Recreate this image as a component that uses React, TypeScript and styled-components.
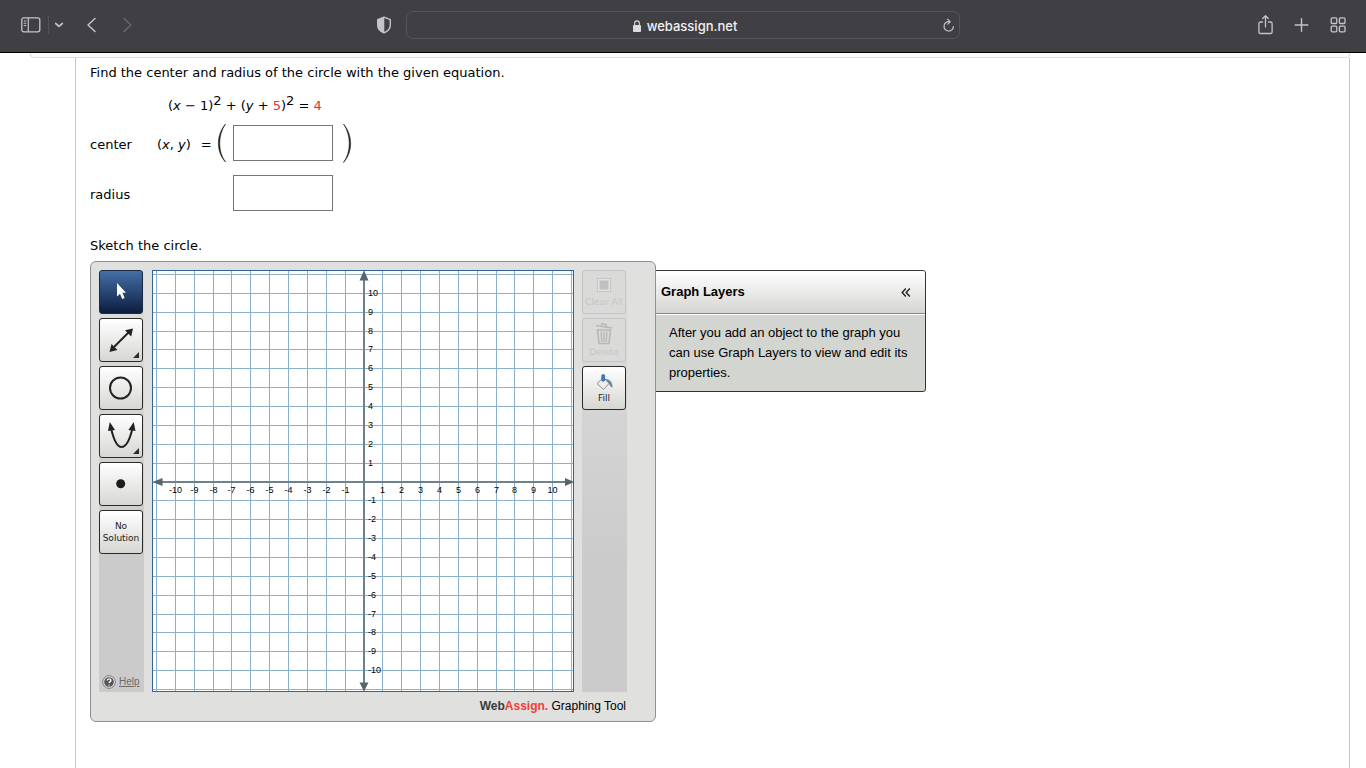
import React from "react";
import styled, { createGlobalStyle, css } from "styled-components";

const GlobalStyle = createGlobalStyle`
  *, *::before, *::after { box-sizing: border-box; }
  html, body, #root { min-height: 100%; }
  html { height: 100%; }
  body, #root { height: 100%; }
  body {
    margin: 0;
    background: #fff;
    color: #000;
    font-family: "DejaVu Sans", Verdana, sans-serif;
    font-size: 13px;
    line-height: 16px;
  }
  button { font: inherit; color: inherit; margin: 0; padding: 0; }
`;

const Page = styled.div`
  min-height: 100%;
  display: flex;
  flex-direction: column;
`;

/* ---------- browser toolbar ---------- */

const BrowserBar = styled.header`
  display: grid;
  grid-template-columns: 1fr 41% 1fr;
  align-items: center;
  height: 53px;
  padding-bottom: 2px;
  background: #403f43;
  border-bottom: 1px solid #000;
  color: #c6c4c9;
`;

const BarGroup = styled.div<{ $end?: boolean }>`
  display: flex;
  align-items: center;
  justify-content: ${(p) => (p.$end ? "flex-end" : "flex-start")};
  gap: ${(p) => (p.$end ? "16px" : "0")};
  padding: ${(p) => (p.$end ? "0 18px 0 0" : "0 11px 0 21px")};
`;

const BarButton = styled.button<{ $dim?: boolean; $push?: boolean }>`
  display: flex;
  align-items: center;
  justify-content: center;
  height: 24px;
  border: 0;
  background: none;
  color: ${(p) => (p.$dim ? "#69686c" : "#c6c4c9")};
  margin-left: ${(p) => (p.$push ? "auto" : "0")};
`;

const BarDivider = styled.span`
  width: 1px;
  height: 18px;
  margin: 0 5px 0 7px;
  background: #545357;
`;

const NavButtons = styled.div`
  display: flex;
  gap: 16px;
  margin-left: 16px;
`;

const AddressBar = styled.div`
  display: grid;
  grid-template-columns: 24px 1fr 20px;
  align-items: center;
  height: 28px;
  margin: 0 3px;
  border: 1px solid #55545a;
  border-radius: 7px;
`;

const Address = styled.div`
  grid-column: 2;
  display: flex;
  align-items: center;
  justify-content: center;
  gap: 6px;
  padding-top: 2px;
  color: #f2f1f3;
  font-family: Inter, sans-serif;
  font-size: 13px;
  font-weight: 500;
`;

/* ---------- question ---------- */

const PreviousSection = styled.div`
  height: 5px;
  flex: none;
  margin: 0 16px 0 30px;
  background: #fbfbfb;
  border: 1px solid #ddd;
  border-top: 0;
  border-radius: 0 0 4px 4px;
`;

const Question = styled.main`
  flex: 1;
  margin: 0 16px 0 75px;
  padding: 7px 14px 46px;
  border: solid #c8c8c8;
  border-width: 0 1px;
`;

const Prompt = styled.p`
  margin: 0;
`;

const Equation = styled.div`
  margin: 17px 0 11px 78px;

  sup {
    font-size: 13px;
    line-height: 0;
    vertical-align: 5px;
  }
`;

const Given = styled.span`
  color: #e5302c;
`;

const AnswerRow = styled.div`
  display: grid;
  grid-template-columns: 67px 60px 16px 100px auto;
  grid-template-rows: 36px;
  justify-content: start;
  align-items: center;
  margin-bottom: 14px;
`;

const AnswerLabel = styled.label`
  padding-top: 3px;
`;

const Tuple = styled.span`
  display: flex;
  gap: 10px;
  padding-top: 3px;
`;

const AnswerInput = styled.input`
  grid-column: 4;
  width: 100%;
  height: 36px;
  padding: 4px 8px;
  border: 1px solid #767676;
  border-radius: 0;
  background: #fff;
  font: inherit;
`;

const Paren = styled.svg<{ $right?: boolean }>`
  display: block;
  margin-left: ${(p) => (p.$right ? "10px" : "0")};
`;

const SketchPrompt = styled(Prompt)`
  margin: 27px 0 7px;
`;

/* ---------- graphing tool ---------- */

const Workspace = styled.div`
  display: flex;
  align-items: flex-start;
`;

const GraphTool = styled.section`
  position: relative;
  z-index: 1;
  flex: none;
  padding: 8px 28px 7px 8px;
  background: #e0e0de;
  border: 1px solid #909090;
  border-radius: 6px;
`;

const ToolBody = styled.div`
  display: flex;
  gap: 8px;
`;

const ToolColumn = styled.div`
  display: flex;
  flex-direction: column;
  gap: 4px;
  width: 45px;
  padding-right: 1px;
  background: linear-gradient(#dddddd, #cbcbcb 70%);
`;

const ToolButton = styled.button<{ $active?: boolean }>`
  display: flex;
  flex-direction: column;
  align-items: center;
  justify-content: center;
  height: 44px;
  border: 1px solid #2a2a2a;
  border-radius: 3px;
  background: linear-gradient(#ffffff, #d6d6d3);
  color: #222;
  font-size: 9px;
  line-height: 12px;

  ${(p) =>
    p.$active &&
    css`
      border-color: #1c2a44;
      background: linear-gradient(#456fa8, #0b1e3f);
      color: #fff;
    `}

  &:disabled {
    border-color: #c4c4c4;
    background: #dadad9;
    color: #c6c6c6;
  }
`;

const HelpLink = styled.a`
  display: flex;
  align-items: center;
  gap: 3px;
  margin: auto 0 2px 3px;
  color: #6b6b6b;
  font-family: "Liberation Sans", Arial, sans-serif;
  font-size: 10px;
`;

const ToolFooter = styled.div`
  margin-top: 6px;
  padding-right: 1px;
  text-align: right;
  font-family: "Liberation Sans", Arial, sans-serif;
  font-size: 12px;

  strong { color: #3a3a3a; }
  em { color: #ef3e3a; font-style: normal; }
`;

const Layers = styled.aside`
  width: 271px;
  margin: 9px 0 0 -1px;
  overflow: hidden;
  background: #d3d5d0;
  border: 1px solid #333;
  border-radius: 0 3px 3px 0;
  font-family: "Liberation Sans", Arial, sans-serif;
`;

const LayersHeader = styled.div`
  display: flex;
  align-items: center;
  justify-content: space-between;
  height: 43px;
  padding: 0 14px 0 5px;
  background: linear-gradient(#ffffff, #d5d5d2);
  border-bottom: 1px solid #868686;
`;

const LayersTitle = styled.h2`
  margin: 0;
  font-size: 13px;
  line-height: 20px;
`;

const CollapseButton = styled.button`
  display: flex;
  border: 0;
  background: none;
`;

const LayersText = styled.p`
  margin: 0;
  padding: 8px 13px;
  border-top: 1px solid #fff;
  line-height: 20px;
`;

/* ---------- graph ---------- */

const SIZE = 422;
const CENTER = 212;
const UNIT = 18.86;
const GridText = styled.text`
  font-family: "Liberation Sans", Arial, sans-serif;
  font-size: 9px;
  fill: #000;
`;

const lines = Array.from({ length: 23 }, (_, i) => i - 11);
const labels = lines.filter((n) => n !== 0 && Math.abs(n) < 11);

function Graph() {
  const at = (n: number) => Math.round(CENTER + n * UNIT - 0.5) + 0.5;
  return (
    <svg width={SIZE} height={SIZE} role="img" aria-label="Coordinate grid">
      <rect width={SIZE} height={SIZE} fill="#fff" />
      {lines.map((n) => (
        <g key={n} stroke="#8cb0c9">
          <line x1={at(n)} x2={at(n)} y1="0" y2={SIZE} />
          <line y1={at(n)} y2={at(n)} x1="0" x2={SIZE} />
        </g>
      ))}
      <rect x="0.5" y="0.5" width={SIZE - 1} height={SIZE - 1} fill="none" stroke="#35638f" />
      <g stroke="#6b8391" strokeWidth="2">
        <line x1={CENTER} x2={CENTER} y1="4" y2={SIZE - 4} />
        <line y1={CENTER} y2={CENTER} x1="4" x2={SIZE - 4} />
      </g>
      <g fill="#56646c">
        <path d="M212 0.5 L216.5 10.5 H207.5 Z" />
        <path d="M212 421.5 L216.5 412.5 H207.5 Z" />
        <path d="M0.5 212 L10.5 208 V216 Z" />
        <path d="M422 212 L413 208 V216 Z" />
      </g>
      {labels.map((n) => (
        <GridText key={`x${n}`} x={at(n)} y="223" textAnchor="middle">
          {n}
        </GridText>
      ))}
      {labels.map((n) => (
        <GridText key={`y${n}`} x="216" y={at(-n) + 2.5}>
          {n}
        </GridText>
      ))}
    </svg>
  );
}

/* ---------- icons ---------- */

const Corner = () => <path d="M39 33 V39 H33 Z" fill="#2a2a2a" />;

const ToolIcon = ({ children }: { children: React.ReactNode }) => (
  <svg width="42" height="42" viewBox="0 0 42 42" aria-hidden="true">
    {children}
  </svg>
);

const SidebarIcon = () => (
  <svg width="20" height="16" viewBox="0 0 20 16" fill="none" stroke="currentColor" aria-hidden="true">
    <rect x="0.8" y="0.8" width="18" height="14" rx="2" strokeWidth="1.3" />
    <path d="M7.3 1V15" strokeWidth="1.2" />
    <path d="M2.8 4H5.3M2.8 6.3H5.3M2.8 8.6H5.3" />
  </svg>
);

export default function App() {
  return (
    <Page>
      <GlobalStyle />
      <BrowserBar>
        <BarGroup>
          <BarButton aria-label="Show sidebar">
            <SidebarIcon />
          </BarButton>
          <BarDivider />
          <BarButton aria-label="Tab groups">
            <svg width="10" height="6" viewBox="0 0 10 6" fill="none" stroke="currentColor" strokeWidth="1.7" strokeLinecap="round" strokeLinejoin="round">
              <path d="M1.7 1.5L5 4.3L8.3 1.5" />
            </svg>
          </BarButton>
          <NavButtons>
            <BarButton aria-label="Back">
              <svg width="20" height="16" viewBox="0 0 20 16" fill="none" stroke="currentColor" strokeWidth="1.5" strokeLinecap="round" strokeLinejoin="round">
                <path d="M15 1.5L8 8L15 14.5" />
              </svg>
            </BarButton>
            <BarButton aria-label="Forward" $dim>
              <svg width="20" height="16" viewBox="0 0 20 16" fill="none" stroke="currentColor" strokeWidth="1.4" strokeLinecap="round" strokeLinejoin="round">
                <path d="M8 1.5L15 8L8 14.5" />
              </svg>
            </BarButton>
          </NavButtons>
          <BarButton aria-label="Privacy report" $push>
            <svg width="16" height="18" viewBox="0 0 16 18">
              <path d="M8 1.2L14.3 3.6V9.2C14.3 12.8 11.8 15.2 8 16.8C4.2 15.2 1.7 12.8 1.7 9.2V3.6Z" fill="none" stroke="currentColor" strokeWidth="1.4" strokeLinejoin="round" />
              <path d="M8.3 1.2V16.8C4.2 15.2 1.7 12.8 1.7 9.2V3.6Z" fill="currentColor" />
            </svg>
          </BarButton>
        </BarGroup>
        <AddressBar>
          <Address>
            <svg width="8" height="12" viewBox="0 0 8 12" aria-hidden="true">
              <rect x="0" y="5" width="8" height="7" rx="1" fill="#dcdbde" />
              <path d="M1.7 5.5V3.2A2.3 2.3 0 0 1 6.3 3.2V5.5" fill="none" stroke="#dcdbde" strokeWidth="1.1" />
            </svg>
            <span>webassign.net</span>
          </Address>
          <BarButton aria-label="Reload">
            <svg width="14" height="15" viewBox="0 0 14 15" fill="none" stroke="currentColor" strokeWidth="1.2" strokeLinecap="round" strokeLinejoin="round">
              <path d="M7.5 3.7A4.7 4.7 0 1 0 11.4 8.5" />
              <path d="M5.6 1.2L8.2 3.8L5.8 6.2" />
            </svg>
          </BarButton>
        </AddressBar>
        <BarGroup $end>
          <BarButton aria-label="Share">
            <svg width="20" height="22" viewBox="0 0 20 22" fill="none" stroke="currentColor" strokeWidth="1.3" strokeLinecap="round" strokeLinejoin="round">
              <path d="M6.5 8H4.5A1.6 1.6 0 0 0 2.9 9.6V17.9A1.6 1.6 0 0 0 4.5 19.5H14.5A1.6 1.6 0 0 0 16.1 17.9V9.6A1.6 1.6 0 0 0 14.5 8H12.5" />
              <path d="M9.5 13V2M6.7 4.5L9.5 1.7L12.3 4.5" />
            </svg>
          </BarButton>
          <BarButton aria-label="New tab">
            <svg width="20" height="16" viewBox="0 0 20 16" fill="none" stroke="currentColor" strokeWidth="1.4" strokeLinecap="round">
              <path d="M3.2 8H15.8M9.5 1.7V14.3" />
            </svg>
          </BarButton>
          <BarButton aria-label="Tab overview">
            <svg width="20" height="16" viewBox="0 0 20 16" fill="none" stroke="currentColor" strokeWidth="1.3">
              <rect x="3.2" y="0.9" width="5.6" height="5.6" rx="1" />
              <rect x="11.4" y="0.9" width="5.6" height="5.6" rx="1" />
              <rect x="3.2" y="9.2" width="5.6" height="5.6" rx="1" />
              <rect x="11.4" y="9.2" width="5.6" height="5.6" rx="1" />
            </svg>
          </BarButton>
        </BarGroup>
      </BrowserBar>

      <PreviousSection />
      <Question>
        <Prompt>Find the center and radius of the circle with the given equation.</Prompt>
        <Equation>
          (<i>x</i> − 1)<sup>2</sup> + (<i>y</i> + <Given>5</Given>)<sup>2</sup> = <Given>4</Given>
        </Equation>
        <AnswerRow>
          <AnswerLabel htmlFor="center">center</AnswerLabel>
          <Tuple>
            <span>(<i>x</i>, <i>y</i>)</span>
            <span>=</span>
          </Tuple>
          <Paren width="9" height="40" viewBox="0 0 9 40" aria-hidden="true">
            <path d="M8.5 1C-1 12 -1 29 8.5 39C0.8 29 0.8 12 8.5 1Z" fill="#222" stroke="#222" strokeWidth="0.6" />
          </Paren>
          <AnswerInput id="center" type="text" />
          <Paren $right width="9" height="40" viewBox="0 0 9 40" aria-hidden="true">
            <path d="M0.5 1C10 12 10 29 0.5 39.5C8.2 29 8.2 12 0.5 1Z" fill="#222" stroke="#222" strokeWidth="0.6" />
          </Paren>
        </AnswerRow>
        <AnswerRow>
          <AnswerLabel htmlFor="radius">radius</AnswerLabel>
          <AnswerInput id="radius" type="text" />
        </AnswerRow>
        <SketchPrompt>Sketch the circle.</SketchPrompt>

        <Workspace>
          <GraphTool aria-label="Graphing Tool">
            <ToolBody>
              <ToolColumn>
                <ToolButton $active aria-label="Select" aria-pressed="true">
                  <ToolIcon>
                    <path d="M17 12L17 25.5L20 22.7L22.2 28L24.7 26.9L22.4 21.8H26Z" fill="#fff" />
                  </ToolIcon>
                </ToolButton>
                <ToolButton aria-label="Line">
                  <ToolIcon>
                    <path d="M14 28L29 13" stroke="#222" strokeWidth="2" />
                    <path d="M33 9.5L31.2 17.5L25 11.3ZM9.5 33L17.5 31L11.5 25Z" fill="#222" />
                    <Corner />
                  </ToolIcon>
                </ToolButton>
                <ToolButton aria-label="Circle">
                  <ToolIcon>
                    <circle cx="20.5" cy="21" r="10.5" fill="none" stroke="#222" strokeWidth="2" />
                  </ToolIcon>
                </ToolButton>
                <ToolButton aria-label="Parabola">
                  <ToolIcon>
                    <path d="M11 13C13.5 24 16.5 32 21.5 32C26.5 32 30 24 32.5 13" fill="none" stroke="#222" strokeWidth="2" />
                    <path d="M9.8 7L15 15L8 16ZM33.7 7L28.4 15L35.5 16Z" fill="#222" />
                    <Corner />
                  </ToolIcon>
                </ToolButton>
                <ToolButton aria-label="Point">
                  <ToolIcon>
                    <circle cx="20.7" cy="20.7" r="4.5" fill="#1c1c1c" />
                  </ToolIcon>
                </ToolButton>
                <ToolButton>
                  <span>No</span>
                  <span>Solution</span>
                </ToolButton>
                <HelpLink href="#help">
                  <svg width="14" height="14" viewBox="0 0 14 14" aria-hidden="true">
                    <circle cx="7" cy="7" r="6.3" fill="#e8e8e8" stroke="#777" />
                    <circle cx="7" cy="7" r="4.8" fill="#555" />
                    <path d="M5.2 5.6C5.2 3.2 8.9 3.3 8.9 5.4C8.9 6.7 7.1 6.6 7.1 8.1M7.1 9.4V10.6" fill="none" stroke="#fff" strokeWidth="1.3" />
                  </svg>
                  <span>Help</span>
                </HelpLink>
              </ToolColumn>

              <Graph />

              <ToolColumn>
                <ToolButton disabled>
                  <svg width="20" height="20" viewBox="0 0 20 20" aria-hidden="true">
                    <rect x="3.5" y="2.5" width="13" height="13" fill="#e3e3e3" stroke="#c6c6c6" />
                    <rect x="5.5" y="4.5" width="9" height="9" fill="#c0c0c0" />
                  </svg>
                  <span>Clear All</span>
                </ToolButton>
                <ToolButton disabled>
                  <svg width="20" height="24" viewBox="0 0 20 24" fill="none" stroke="#b8b8b8" aria-hidden="true">
                    <path d="M2 3.5L18 6M7.5 3.2L8 1.8L12 2.6L12 4.2" strokeWidth="1.6" />
                    <path d="M3.5 8H16.5L15 21.5H5Z" strokeWidth="1.6" />
                    <path d="M7.2 9.5L7.7 20M10 9.5V20M12.8 9.5L12.3 20" strokeWidth="1.4" />
                  </svg>
                  <span>Delete</span>
                </ToolButton>
                <ToolButton>
                  <svg width="20" height="20" viewBox="0 0 20 20" aria-hidden="true">
                    <path d="M3 11.5L9.5 5.5L15.5 11L9.5 17.5Z" fill="#ececec" stroke="#8f8f8f" />
                    <path d="M10.5 7C15 6.5 18.8 9.5 18.5 15.5C16.3 15 15.8 13 14.8 11.5Z" fill="#6d8699" />
                    <rect x="7.7" y="2.6" width="3" height="6.6" rx="1.2" fill="#3f7cc8" stroke="#2b5d9e" strokeWidth="0.6" />
                  </svg>
                  <span>Fill</span>
                </ToolButton>
              </ToolColumn>
            </ToolBody>
            <ToolFooter>
              <strong>Web<em>Assign.</em></strong> Graphing Tool
            </ToolFooter>
          </GraphTool>

          <Layers>
            <LayersHeader>
              <LayersTitle>Graph Layers</LayersTitle>
              <CollapseButton aria-label="Collapse Graph Layers">
                <svg width="10" height="10" viewBox="0 0 10 10" fill="none" stroke="#222" strokeWidth="1.4" aria-hidden="true">
                  <path d="M4.8 1.5L1.2 5.5L4.8 9.5M8.8 1.5L5.2 5.5L8.8 9.5" />
                </svg>
              </CollapseButton>
            </LayersHeader>
            <LayersText>
              After you add an object to the graph you can use Graph Layers to view and edit its properties.
            </LayersText>
          </Layers>
        </Workspace>
      </Question>
    </Page>
  );
}
